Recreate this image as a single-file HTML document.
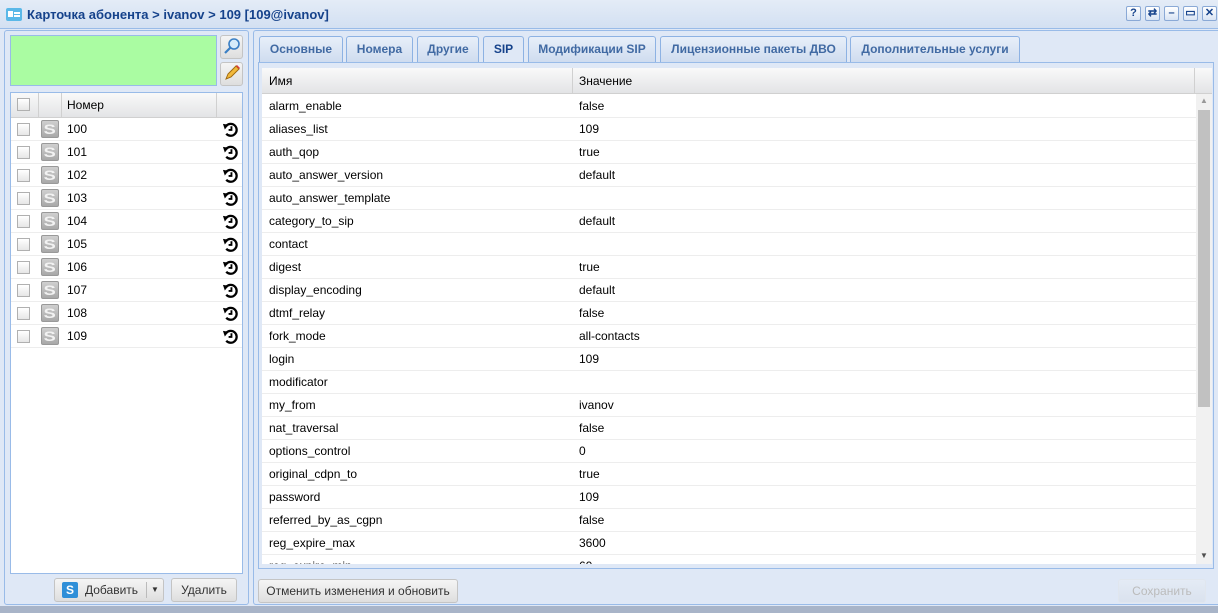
<!DOCTYPE html>
<html><head><meta charset="utf-8"><style>
*{box-sizing:border-box;margin:0;padding:0}
body{width:1218px;height:613px;overflow:hidden;background:#dfe8f6;font-family:"Liberation Sans",Arial,sans-serif;font-size:12px;color:#000;position:relative}
.abs{position:absolute}
.title{left:0;top:0;width:1218px;height:29px;background:linear-gradient(#e4ecf7,#d3e0f2);border-bottom:1px solid #99bbe8}
.title span{position:absolute;left:27px;top:7px;font-weight:bold;font-size:13px;color:#15428b}
.tb{top:6px;width:15px;height:15px;border:1px solid #8aa9d6;border-radius:2px;background:linear-gradient(#fff,#d8e4f4);color:#15428b;font-size:11px;font-weight:bold;text-align:center;line-height:13px}
.panel{border:1px solid #99bbe8;background:#dfe8f6}
.grid{background:#fff;border:1px solid #99bbe8}
.hdr{background:linear-gradient(#f9f9f9,#e3e4e6);border-bottom:1px solid #d0d0d0;height:25px}
.row{height:23px;border-bottom:1px solid #ededed;position:relative;line-height:22px}
.cb{position:absolute;left:6px;top:5px;width:13px;height:13px;border:1px solid #b0b0b0;background:linear-gradient(#fff,#e6e6e6)}
.sic{position:absolute;left:30px;top:2px;width:18px;height:18px;border-radius:2px;background:linear-gradient(#cfcfcf,#a8a8a8);border:1px solid #999;color:#f2f2f2;font-weight:bold;font-size:14px;line-height:16px;text-align:center;transform-origin:center}
.sic b{display:inline-block;transform:scaleX(1.3)}
.hist{position:absolute;left:211px;top:3px}
.tab{top:36px;height:26px;border:1px solid #8db2e3;border-bottom:none;border-radius:3px 3px 0 0;background:linear-gradient(#e8eff9,#cfdcef);color:#416aa3;font-weight:bold;font-size:12px;text-align:center;line-height:24px}
.tab.on{background:#dfe8f6;color:#15428b;height:27px}
.btn{height:24px;border:1px solid #c4c4c4;border-radius:3px;background:linear-gradient(#f5f5f5,#dedede);text-align:center;line-height:22px;font-size:12px;color:#333}
.rrow{height:23px;border-bottom:1px solid #ededed;position:relative;line-height:22px;font-size:12px}
.rrow .a{position:absolute;left:10px}.rrow .b{position:absolute;left:320px}
</style></head><body>
<svg width="0" height="0" style="position:absolute"><defs><symbol id="h" viewBox="0 0 18 18"><path d="M4.2 5.5 A6.3 6.3 0 1 1 4.5 13.5" fill="none" stroke="#000" stroke-width="2.4"/><polygon points="1,3 7,4 3,9" fill="#000"/><path d="M10 5.5 V9.5 H7" fill="none" stroke="#000" stroke-width="2"/></symbol></defs></svg>
<div class="abs title">
<div class="abs" style="left:6px;top:8px;width:16px;height:13px;border-radius:2px;background:#5ab8e8"><div style="position:absolute;left:2px;top:3px;width:5px;height:6px;background:#fff"></div><div style="position:absolute;left:8px;top:4px;width:6px;height:2px;background:#fff"></div><div style="position:absolute;left:8px;top:7px;width:6px;height:2px;background:#fff"></div></div>
<span>Карточка абонента &gt; ivanov &gt; 109 [109@ivanov]</span>
<div class="abs tb" style="left:1126px">?</div>
<div class="abs tb" style="left:1145px">⇄</div>
<div class="abs tb" style="left:1164px">–</div>
<div class="abs tb" style="left:1183px">▭</div>
<div class="abs tb" style="left:1202px">✕</div>
</div>

<div class="abs panel" style="left:4px;top:30px;width:245px;height:575px;border-radius:3px"></div>
<div class="abs" style="left:10px;top:35px;width:207px;height:51px;background:#aafca2;border:1px solid #99bbe8"></div>
<div class="abs btn" style="left:220px;top:35px;width:23px;height:24px;padding:0"><svg width="20" height="20" viewBox="0 0 20 20"><circle cx="12" cy="8" r="5" fill="#d6ecfa" stroke="#3b7fc4" stroke-width="1.6"/><line x1="8.5" y1="11.5" x2="3" y2="17" stroke="#3b7fc4" stroke-width="2.2"/></svg></div>
<div class="abs btn" style="left:220px;top:62px;width:23px;height:24px;padding:0"><svg width="20" height="20" viewBox="0 0 20 20"><path d="M4 16 L6 11 L14 3 L17 6 L9 14 Z" fill="#f2b93b" stroke="#a06a10"/><path d="M14 3 L17 6 L18 5 L15 2Z" fill="#e03a3a"/></svg></div>

<div class="abs grid" style="left:10px;top:92px;width:233px;height:482px">
<div class="hdr" style="position:relative"><div class="cb" style="top:5px"></div><div style="position:absolute;left:27px;top:0;height:24px;border-left:1px solid #d0d0d0"></div><div style="position:absolute;left:50px;top:0;height:24px;border-left:1px solid #d0d0d0"></div><div style="position:absolute;left:205px;top:0;height:24px;border-left:1px solid #d0d0d0"></div><span style="position:absolute;left:56px;top:5px">Номер</span></div>
<div class="row"><div class="cb"></div><div class="sic"><b>S</b></div><span style="position:absolute;left:56px">100</span><svg class="hist" width="17" height="17"><use href="#h"/></svg></div>
<div class="row"><div class="cb"></div><div class="sic"><b>S</b></div><span style="position:absolute;left:56px">101</span><svg class="hist" width="17" height="17"><use href="#h"/></svg></div>
<div class="row"><div class="cb"></div><div class="sic"><b>S</b></div><span style="position:absolute;left:56px">102</span><svg class="hist" width="17" height="17"><use href="#h"/></svg></div>
<div class="row"><div class="cb"></div><div class="sic"><b>S</b></div><span style="position:absolute;left:56px">103</span><svg class="hist" width="17" height="17"><use href="#h"/></svg></div>
<div class="row"><div class="cb"></div><div class="sic"><b>S</b></div><span style="position:absolute;left:56px">104</span><svg class="hist" width="17" height="17"><use href="#h"/></svg></div>
<div class="row"><div class="cb"></div><div class="sic"><b>S</b></div><span style="position:absolute;left:56px">105</span><svg class="hist" width="17" height="17"><use href="#h"/></svg></div>
<div class="row"><div class="cb"></div><div class="sic"><b>S</b></div><span style="position:absolute;left:56px">106</span><svg class="hist" width="17" height="17"><use href="#h"/></svg></div>
<div class="row"><div class="cb"></div><div class="sic"><b>S</b></div><span style="position:absolute;left:56px">107</span><svg class="hist" width="17" height="17"><use href="#h"/></svg></div>
<div class="row"><div class="cb"></div><div class="sic"><b>S</b></div><span style="position:absolute;left:56px">108</span><svg class="hist" width="17" height="17"><use href="#h"/></svg></div>
<div class="row"><div class="cb"></div><div class="sic"><b>S</b></div><span style="position:absolute;left:56px">109</span><svg class="hist" width="17" height="17"><use href="#h"/></svg></div>
</div>
<div class="abs btn" style="left:54px;top:578px;width:110px;text-align:left;padding-left:30px">Добавить<div style="position:absolute;left:7px;top:3px;width:16px;height:16px;border-radius:2px;background:#2f8fd8;color:#fff;font-weight:bold;font-size:12px;text-align:center;line-height:16px">S</div><div style="position:absolute;left:91px;top:3px;height:16px;border-left:1px solid #bbb"></div><span style="position:absolute;left:96px;top:0;font-size:8px">▼</span></div>
<div class="abs btn" style="left:171px;top:578px;width:66px">Удалить</div>

<div class="abs panel" style="left:253px;top:30px;width:965px;height:575px;border-right:none;border-radius:3px 0 0 3px"></div>
<div class="abs tab" style="left:259px;width:84px">Основные</div>
<div class="abs tab" style="left:346px;width:67px">Номера</div>
<div class="abs tab" style="left:417px;width:62px">Другие</div>
<div class="abs tab on" style="left:483px;width:41px">SIP</div>
<div class="abs tab" style="left:528px;width:128px">Модификации SIP</div>
<div class="abs tab" style="left:660px;width:187px">Лицензионные пакеты ДВО</div>
<div class="abs tab" style="left:850px;width:170px">Дополнительные услуги</div>
<div class="abs" style="left:258px;top:62px;width:956px;height:507px;border:1px solid #99bbe8;background:#dfe8f6"></div>
<div class="abs" style="left:262px;top:68px;width:950px;height:496px;background:#fff;overflow:hidden">
<div class="hdr" style="position:relative;height:26px;line-height:26px"><span style="position:absolute;left:7px">Имя</span><div style="position:absolute;left:310px;top:0;height:26px;border-left:1px solid #d0d0d0"></div><span style="position:absolute;left:317px">Значение</span><div style="position:absolute;left:932px;top:0;height:26px;border-left:1px solid #d0d0d0"></div></div>
<div style="position:relative;left:-3px;top:1px">
<div class="rrow"><span class="a">alarm_enable</span><span class="b">false</span></div>
<div class="rrow"><span class="a">aliases_list</span><span class="b">109</span></div>
<div class="rrow"><span class="a">auth_qop</span><span class="b">true</span></div>
<div class="rrow"><span class="a">auto_answer_version</span><span class="b">default</span></div>
<div class="rrow"><span class="a">auto_answer_template</span><span class="b"></span></div>
<div class="rrow"><span class="a">category_to_sip</span><span class="b">default</span></div>
<div class="rrow"><span class="a">contact</span><span class="b"></span></div>
<div class="rrow"><span class="a">digest</span><span class="b">true</span></div>
<div class="rrow"><span class="a">display_encoding</span><span class="b">default</span></div>
<div class="rrow"><span class="a">dtmf_relay</span><span class="b">false</span></div>
<div class="rrow"><span class="a">fork_mode</span><span class="b">all-contacts</span></div>
<div class="rrow"><span class="a">login</span><span class="b">109</span></div>
<div class="rrow"><span class="a">modificator</span><span class="b"></span></div>
<div class="rrow"><span class="a">my_from</span><span class="b">ivanov</span></div>
<div class="rrow"><span class="a">nat_traversal</span><span class="b">false</span></div>
<div class="rrow"><span class="a">options_control</span><span class="b">0</span></div>
<div class="rrow"><span class="a">original_cdpn_to</span><span class="b">true</span></div>
<div class="rrow"><span class="a">password</span><span class="b">109</span></div>
<div class="rrow"><span class="a">referred_by_as_cgpn</span><span class="b">false</span></div>
<div class="rrow"><span class="a">reg_expire_max</span><span class="b">3600</span></div>
<div class="rrow"><span class="a">reg_expire_min</span><span class="b">60</span></div>
</div>
<div style="position:absolute;left:934px;top:26px;width:16px;height:470px;background:#f1f1f1"><div style="position:absolute;top:16px;width:12px;height:297px;left:2px;background:#c1c1c1"></div><span style="position:absolute;left:4px;top:2px;font-size:8px;color:#999">▲</span><span style="position:absolute;left:4px;top:457px;font-size:8px;color:#505050">▼</span></div>
</div>
<div class="abs btn" style="left:258px;top:579px;width:200px">Отменить изменения и обновить</div>
<div class="abs btn" style="left:1118px;top:579px;width:88px;color:#bbb;border-color:#e0e6ee;background:linear-gradient(#e4ebf5,#dae2ee)">Сохранить</div>
<div class="abs" style="left:0;top:606px;width:1218px;height:7px;background:#a8b4c8"></div>
</body></html>
